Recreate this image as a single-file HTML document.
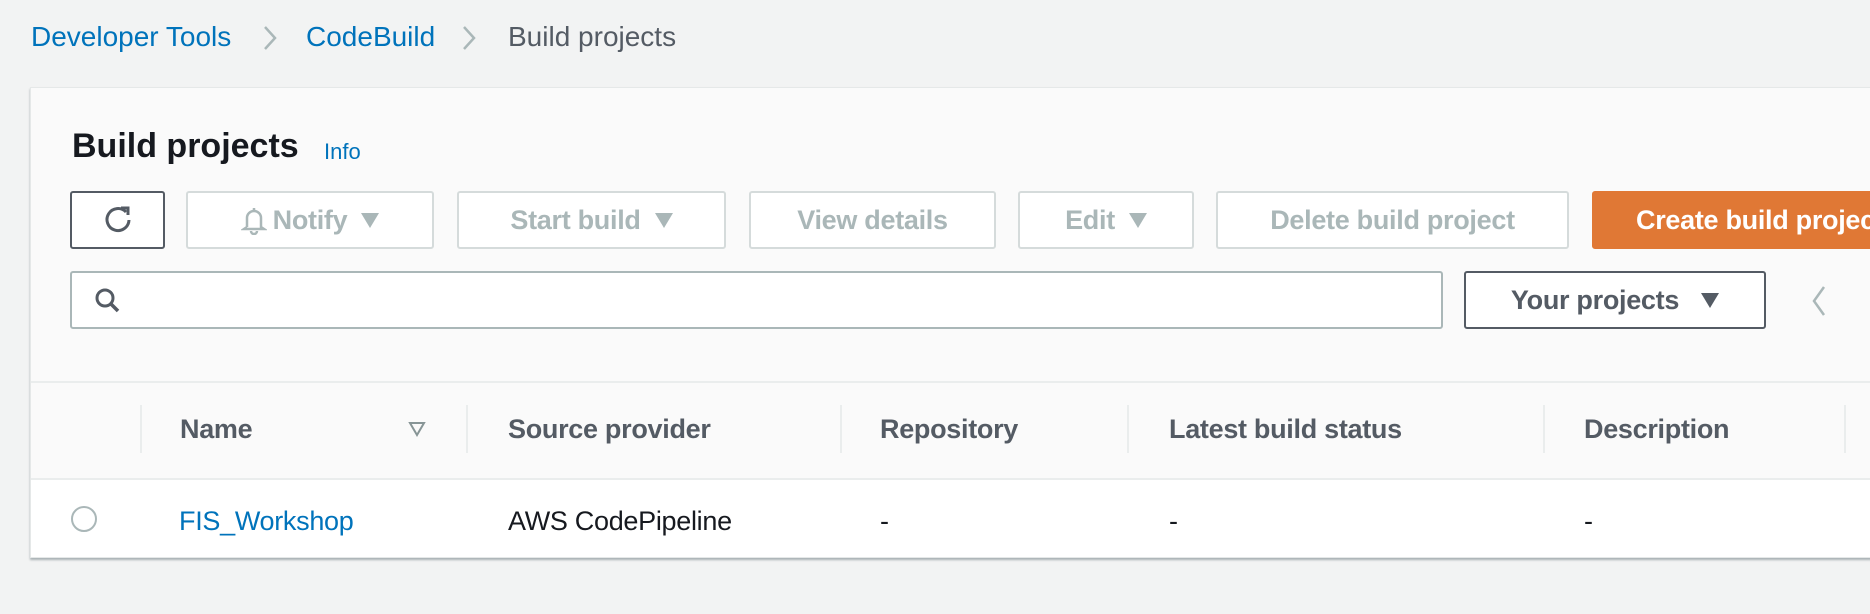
<!DOCTYPE html>
<html><head><meta charset="utf-8"><style>
*{box-sizing:border-box;margin:0;padding:0}
body{width:1870px;height:614px;background:#f2f3f3;font-family:"Liberation Sans",sans-serif;position:relative;overflow:hidden}
.a{position:absolute;white-space:nowrap}
.bc{font-size:28px;top:21px}
.btn{position:absolute;top:191px;height:58px;border:2px solid #d5dbdb;border-radius:3px;background:#fff;color:#aab7b8;font-weight:bold;font-size:27px;display:flex;align-items:center;justify-content:center;gap:14px;letter-spacing:-0.3px}
.tri{display:inline-block;width:0;height:0;border-left:9px solid transparent;border-right:9px solid transparent;border-top:15px solid currentColor}
.th{font-size:27px;font-weight:bold;color:#545b64;top:414px;letter-spacing:-0.3px}
.sep{position:absolute;top:405px;width:2px;height:48px;background:#eaeded}
.td{font-size:27px;color:#16191f;top:506px;letter-spacing:-0.3px}
</style></head><body>
<div class="a bc" style="left:31px;color:#0073bb">Developer Tools</div>
<svg class="a" style="left:262px;top:24px" width="16" height="28"><path d="M3 3 L13 14 L3 25" fill="none" stroke="#aab7b8" stroke-width="2.5"/></svg>
<div class="a bc" style="left:306px;color:#0073bb">CodeBuild</div>
<svg class="a" style="left:461px;top:24px" width="16" height="28"><path d="M3 3 L13 14 L3 25" fill="none" stroke="#aab7b8" stroke-width="2.5"/></svg>
<div class="a bc" style="left:508px;color:#545b64">Build projects</div>

<div class="a" style="left:30px;top:87px;width:1860px;height:471px;background:#fafafa;border:1px solid #e5e8e8;box-shadow:0 2px 2px rgba(0,28,36,.3)"></div>
<div class="a" style="left:31px;top:381px;width:1860px;height:2px;background:#eaeded"></div>
<div class="a" style="left:31px;top:478px;width:1860px;height:79px;background:#fff;border-top:2px solid #eaeded"></div>

<div class="a" style="left:72px;top:127px;font-size:34px;font-weight:bold;color:#16191f">Build projects</div>
<div class="a" style="left:324px;top:139px;font-size:22px;color:#0073bb">Info</div>

<div class="btn" style="left:70px;width:95px;border-color:#545b64">
<svg width="34" height="34" viewBox="0 0 34 34"><path d="M25 9 A11 11 0 1 0 28 17" fill="none" stroke="#545b64" stroke-width="3"/><path d="M20 5 L27 5 L27 12" fill="none" stroke="#545b64" stroke-width="3"/></svg></div>
<div class="btn" style="left:186px;width:248px"><span style="display:flex;align-items:center;gap:6px"><svg width="26" height="30" viewBox="0 0 26 30"><path d="M13 3 L13 5 M6 22 L6 13 A7 7 0 0 1 20 13 L20 22 L23 24 L3 24 L6 22 M10 26 A3 3 0 0 0 16 26" fill="none" stroke="#aab7b8" stroke-width="2.5"/></svg>Notify</span><span class="tri"></span></div>
<div class="btn" style="left:457px;width:269px">Start build <span class="tri"></span></div>
<div class="btn" style="left:749px;width:247px">View details</div>
<div class="btn" style="left:1018px;width:176px">Edit <span class="tri"></span></div>
<div class="btn" style="left:1216px;width:353px">Delete build project</div>
<div class="btn" style="left:1592px;width:300px;background:#e07835;border-color:#e07835;color:#fff;justify-content:flex-start;padding-left:42px">Create build project</div>

<div class="a" style="left:70px;top:271px;width:1373px;height:58px;background:#fff;border:2px solid #aab7b8;border-radius:3px"></div>
<svg class="a" style="left:92px;top:285px" width="32" height="32" viewBox="0 0 32 32"><circle cx="13" cy="13" r="8" fill="none" stroke="#545b64" stroke-width="3"/><path d="M19 19 L26 26" stroke="#545b64" stroke-width="3.5"/></svg>
<div class="btn" style="left:1464px;top:271px;width:302px;border-color:#545b64;color:#545b64;gap:22px">Your projects <span class="tri"></span></div>
<svg class="a" style="left:1810px;top:284px" width="18" height="34"><path d="M14 3 L4 17 L14 31" fill="none" stroke="#aab7b8" stroke-width="2.5"/></svg>

<div class="sep" style="left:140px"></div><div class="sep" style="left:466px"></div><div class="sep" style="left:840px"></div><div class="sep" style="left:1127px"></div><div class="sep" style="left:1543px"></div><div class="sep" style="left:1844px"></div>
<div class="a th" style="left:180px">Name</div>
<svg class="a" style="left:408px;top:421px" width="18" height="16"><path d="M2 2 L16 2 L9 14 Z" fill="none" stroke="#879596" stroke-width="2"/></svg>
<div class="a th" style="left:508px">Source provider</div>
<div class="a th" style="left:880px">Repository</div>
<div class="a th" style="left:1169px">Latest build status</div>
<div class="a th" style="left:1584px">Description</div>

<div class="a" style="left:71px;top:506px;width:26px;height:26px;border:2px solid #aab7b8;border-radius:50%;background:#fff"></div>
<div class="a td" style="left:179px;color:#0073bb">FIS_Workshop</div>
<div class="a td" style="left:508px">AWS CodePipeline</div>
<div class="a td" style="left:880px">-</div>
<div class="a td" style="left:1169px">-</div>
<div class="a td" style="left:1584px">-</div>
</body></html>
